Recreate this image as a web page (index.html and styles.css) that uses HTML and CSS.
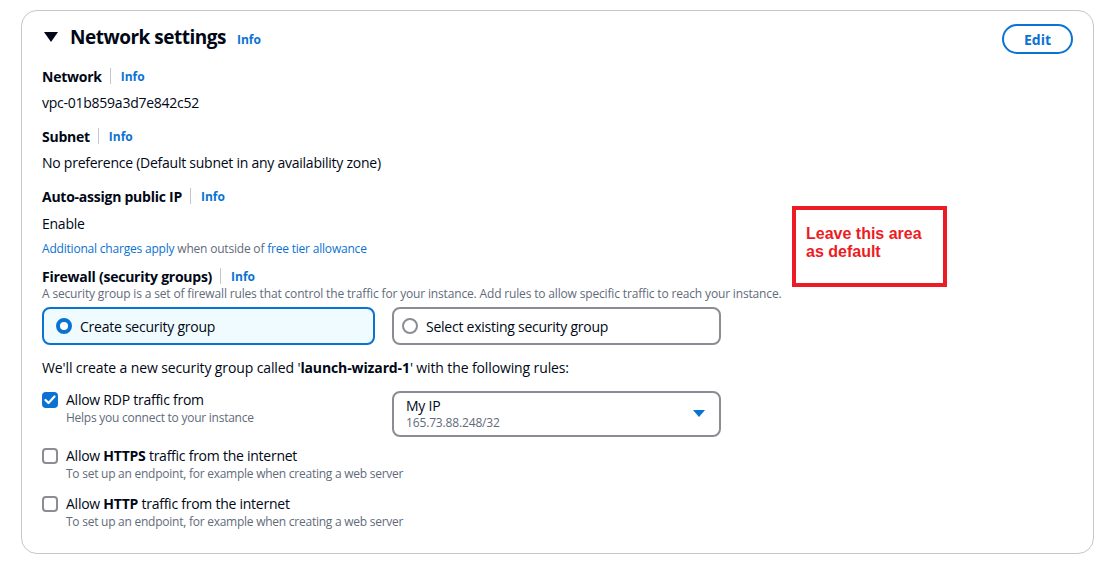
FILE: index.html
```html
<!DOCTYPE html>
<html>
<head>
<meta charset="utf-8">
<link rel="stylesheet" href="styles.css">
</head>
<body>
<div class="panel">
  <div class="header">
    <div class="title-wrap">
      <svg class="caret" width="14" height="10" viewBox="0 0 14 10"><path d="M0 0 H14 L7 10 Z" fill="#000716"/></svg>
      <h2 class="title">Network settings</h2>
      <a class="info info-title">Info</a>
    </div>
    <button class="edit">Edit</button>
  </div>

  <div class="field">
    <div class="label"><span class="label-text">Network</span><span class="sep"></span><a class="info">Info</a></div>
    <div class="value">vpc-01b859a3d7e842c52</div>
  </div>
  <div class="field">
    <div class="label"><span class="label-text">Subnet</span><span class="sep"></span><a class="info">Info</a></div>
    <div class="value">No preference (Default subnet in any availability zone)</div>
  </div>
  <div class="field">
    <div class="label"><span class="label-text">Auto-assign public IP</span><span class="sep"></span><a class="info">Info</a></div>
    <div class="value value-enable">Enable</div>
    <div class="note"><a class="link">Additional charges apply</a> when outside of <a class="link">free tier allowance</a></div>
  </div>
  <div class="field fw">
    <div class="label"><span class="label-text">Firewall (security groups)</span><span class="sep"></span><a class="info">Info</a></div>
    <div class="desc">A security group is a set of firewall rules that control the traffic for your instance. Add rules to allow specific traffic to reach your instance.</div>
  </div>

  <div class="tiles">
    <div class="tile tile-on"><span class="radio radio-on"></span><span>Create security group</span></div>
    <div class="tile"><span class="radio"></span><span>Select existing security group</span></div>
  </div>

  <div class="intro">We'll create a new security group called '<b>launch-wizard-1</b>' with the following rules:</div>

  <div class="rule rule-rdp">
    <div class="check-col">
      <span class="cb cb-on"><svg width="12" height="10" viewBox="0 0 12 10"><path d="M1.5 5 L4.5 8 L10.5 1.5" fill="none" stroke="#fff" stroke-width="2.2" stroke-linecap="round" stroke-linejoin="round"/></svg></span>
      <div>
        <div class="rule-title">Allow RDP traffic from</div>
        <div class="rule-sub">Helps you connect to your instance</div>
      </div>
    </div>
    <div class="select">
      <div>
        <div class="sel-main">My IP</div>
        <div class="sel-sub">165.73.88.248/32</div>
      </div>
      <svg width="12" height="8" viewBox="0 0 12 8"><path d="M0 0 H12 L6 7 Z" fill="#0972d3"/></svg>
    </div>
  </div>

  <div class="rule rule-https">
    <div class="check-col">
      <span class="cb"></span>
      <div>
        <div class="rule-title">Allow <b>HTTPS</b> traffic from the internet</div>
        <div class="rule-sub">To set up an endpoint, for example when creating a web server</div>
      </div>
    </div>
  </div>

  <div class="rule rule-http">
    <div class="check-col">
      <span class="cb"></span>
      <div>
        <div class="rule-title">Allow <b>HTTP</b> traffic from the internet</div>
        <div class="rule-sub">To set up an endpoint, for example when creating a web server</div>
      </div>
    </div>
  </div>

  <div class="annotation">Leave this area<br>as default</div>
</div>
</body>
</html>
```

FILE: styles.css
```css
* { box-sizing: border-box; }
html, body { margin: 0; padding: 0; background: #fff; }
body {
  font-family: "Open Sans", "Noto Sans", sans-serif;
  color: #000716;
  font-size: 14px;
  letter-spacing: -0.25px;
}
.panel {
  position: relative;
  margin: 10px 0 0 21px;
  width: 1073px;
  height: 544px;
  border: 1px solid #c6c6cd;
  border-radius: 16px;
  padding: 10px 20px 0 20px;
}
.header {
  display: flex;
  justify-content: space-between;
  align-items: center;
  height: 32px;
}
.title-wrap { display: flex; align-items: center; }
.caret { margin: 0 12px 0 2px; }
.title {
  margin: 0;
  font-size: 19px;
  font-weight: 700;
  line-height: 28px;
  letter-spacing: -0.5px;
}
.info {
  color: #0972d3;
  font-size: 12px;
  font-weight: 700;
  text-decoration: none;
  letter-spacing: 0;
}
.info-title { margin-left: 11px; margin-top: 4px; }
.edit {
  align-self: flex-start;
  width: 71px;
  height: 30px;
  border: 2px solid #0972d3;
  border-radius: 20px;
  background: #fff;
  color: #0972d3;
  font-family: inherit;
  font-size: 14px;
  font-weight: 700;
  padding: 0;
  margin-top: 3px;
}
.field { margin-top: 13px; }
.label {
  display: flex;
  align-items: center;
  height: 20px;
}
.label-text { font-weight: 700; font-size: 14px; }
.sep {
  display: inline-block;
  width: 1px;
  height: 16px;
  background: #c6c6cd;
  margin: 0 10px 0 8px;
}
.value {
  margin-top: 7px;
  line-height: 20px;
}
.value-enable { margin-top: 8px; }
.note {
  margin-top: 7px;
  font-size: 12px;
  line-height: 16px;
  color: #5f6b7a;
  letter-spacing: -0.2px;
}
.link { color: #0972d3; text-decoration: none; }
.fw { margin-top: 9px; }
.desc {
  font-size: 12px;
  line-height: 16px;
  color: #5f6b7a;
  letter-spacing: -0.16px;
}
.tiles {
  display: flex;
  gap: 17px;
  margin-top: 5px;
}
.tile {
  display: flex;
  align-items: center;
  height: 38px;
  width: 329px;
  border: 2px solid #8c8c94;
  border-radius: 8px;
  padding-left: 8px;
  gap: 8px;
}
.tile-on {
  width: 333px;
  border-color: #0972d3;
  background: #f0fbff;
  padding-left: 12px;
}
.radio {
  width: 16px;
  height: 16px;
  border-radius: 50%;
  border: 2px solid #8c8c94;
  background: #fff;
  flex: none;
}
.radio-on { border: 4px solid #0972d3; }
.intro {
  margin-top: 13px;
  line-height: 20px;
  letter-spacing: -0.12px;
}
.rule { display: flex; align-items: flex-start; }
.rule-rdp { margin-top: 12px; }
.rule-https { margin-top: 9px; }
.rule-http { margin-top: 12px; }
.check-col {
  display: flex;
  align-items: flex-start;
  gap: 8px;
  width: 350px;
  white-space: nowrap;
}
.cb {
  flex: none;
  width: 16px;
  height: 16px;
  margin-top: 2px;
  border: 2px solid #8c8c94;
  border-radius: 4px;
  display: flex;
  align-items: center;
  justify-content: center;
}
.cb-on { background: #0972d3; border-color: #0972d3; }
.rule-title { line-height: 20px; }
.rule-sub { font-size: 12px; line-height: 16px; color: #5f6b7a; letter-spacing: -0.25px; }
.select {
  display: flex;
  align-items: center;
  justify-content: space-between;
  width: 329px;
  height: 46px;
  border: 2px solid #8c8c94;
  border-radius: 8px;
  padding: 0 14px 0 12px;
  margin-top: 1px;
}
.sel-main { line-height: 18px; }
.sel-sub { font-size: 12px; line-height: 16px; color: #5f6b7a; letter-spacing: -0.15px; }
.annotation {
  position: absolute;
  left: 770px;
  top: 195px;
  width: 155px;
  height: 81px;
  border: 4px solid #ed1c24;
  padding: 15px 0 0 10px;
  font-family: "Liberation Sans", Arial, sans-serif;
  font-weight: 700;
  font-size: 16px;
  line-height: 18px;
  color: #ed1c24;
  letter-spacing: 0;
}
```
